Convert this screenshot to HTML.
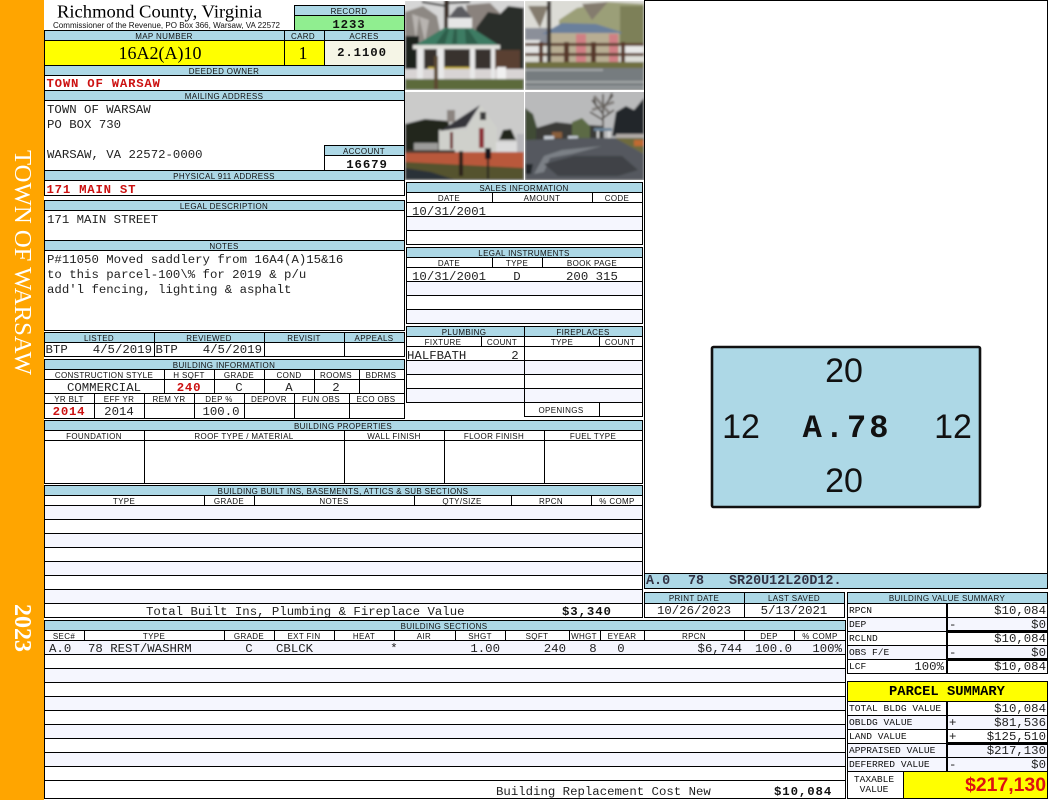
<!DOCTYPE html>
<html><head><meta charset="utf-8"><title>Richmond County, Virginia</title>
<style>
html,body{margin:0;padding:0;background:#fff;width:1050px;height:800px;overflow:hidden}
svg{display:block}
.l{font:8px "Liberation Sans",sans-serif;text-anchor:middle;letter-spacing:.35px;fill:#111}
.m{font:12.35px "Liberation Mono",monospace;fill:#222}
.b{font:bold 12.35px "Liberation Mono",monospace;fill:#111;letter-spacing:.9px}
.r{font:bold 12.35px "Liberation Mono",monospace;fill:#cc1111;letter-spacing:.75px}
.c{text-anchor:middle}.e{text-anchor:end}
.s{font:9.6px "Liberation Mono",monospace;fill:#111}
.a{font:34px "Liberation Sans",sans-serif;text-anchor:middle;fill:#111}
</style></head><body>
<svg width="1050" height="800" viewBox="0 0 1050 800" xmlns="http://www.w3.org/2000/svg">
<defs>
<filter id="f" x="0" y="0" width="100%" height="100%"><feGaussianBlur stdDeviation="1"/></filter>
<clipPath id="c1"><rect x="1" y="1" width="119" height="89"/></clipPath>
<clipPath id="c3"><rect x="1" y="2" width="119" height="88"/></clipPath>
</defs>
<rect width="1050" height="800" fill="#fff"/>
<rect width="44" height="800" fill="#FFA500"/>
<text transform="translate(15,150) rotate(90)" font-family="Liberation Serif" font-size="24" fill="#fff" textLength="225" lengthAdjust="spacingAndGlyphs">TOWN OF WARSAW</text>
<text transform="translate(15,604) rotate(90)" font-family="Liberation Serif" font-weight="bold" font-size="24" fill="#fff">2023</text>

<path fill="#ADD8E6" d="M294 5h110v11h-110zM44 30h360v10h-360zM44 65h360v10h-360zM44 90h360v10h-360zM324 145h80v10h-80zM44 170h360v10h-360zM44 200h360v10h-360zM44 240h360v10h-360zM44 332h360v10h-360zM44 359h360v10h-360zM44 420h598v10h-598zM44 485h598v10h-598zM44 620h801v10h-801zM644 592h200v11h-200zM847 592h200v11h-200zM406 182h236v10h-236zM406 247h236v10h-236zM406 326h236v10h-236zM644 573h404v15h-404z"/>
<rect x="294" y="16" width="110" height="14" fill="#90EE90"/>
<path fill="#FFFF00" d="M44 40h280v25h-280zM847 681h200v20h-200zM903 771h144v27h-144z"/>
<rect x="324" y="40" width="80" height="25" fill="#F5F5E6"/>
<path fill="#F5F6FE" d="M44 505h598v14h-598zM44 533h598v14h-598zM44 561h598v14h-598zM44 589h598v14h-598zM44 640h801v14h-801zM44 668h801v14h-801zM44 696h801v14h-801zM44 724h801v14h-801zM44 752h801v14h-801zM406 216h236v14h-236zM406 281h236v14h-236zM406 309h236v14h-236zM406 360h236v14h-236zM406 388h236v14h-236zM847 617h200v14h-200zM847 645h200v14h-200zM847 715h200v14h-200zM847 743h200v14h-200zM847 757h200v14h-200z"/>

<path stroke="#000" stroke-width="1" fill="none" shape-rendering="crispEdges" d="
M44 30.5H405M44 40.5H405M44 65.5H405M44 75.5H405M44 90.5H405M44 100.5H405M44 170.5H405M44 180.5H405M44 195.5H405
M44 200.5H405M44 210.5H405M44 240.5H405M44 250.5H405M44 330.5H405M44 332.5H405M44 342.5H405M44 356.5H405M44 359.5H405M44 369.5H405M44 379.5H405M44 393.5H405M44 403.5H405M44 418.5H405
M44.5 30V196M44.5 200V331M44.5 332V357M44.5 359V419M404.5 5V196M404.5 200V331M404.5 332V357M404.5 359V419
M284.5 30V65M324.5 30V65M324.5 145V170M324 145.5H405M324 155.5H405M294 5.5H405M294 15.5H405M294.5 5V30
M154.5 332V356M264.5 332V356M344.5 332V356
M164.5 369V393M214.5 369V393M264.5 369V393M314.5 369V393M359.5 369V393M94.5 393V418M144.5 393V418M194.5 393V418M244.5 393V418M294.5 393V418M349.5 393V418
M44 420.5H643M44 430.5H643M44 440.5H643M44 483.5H643M44.5 420V484M642.5 420V484M144.5 430V483M344.5 430V483M444.5 430V483M544.5 430V483
M44 485.5H643M44 495.5H643M44 505.5H643M44 519.5H643M44 533.5H643M44 547.5H643M44 561.5H643M44 575.5H643M44 589.5H643M44 603.5H643M44 617.5H643M44.5 485V618M642.5 485V618M204.5 495V505M254.5 495V505M414.5 495V505M511.5 495V505M591.5 495V505
M44 620.5H846M44 630.5H846M44 640.5H846M44 654.5H846M44 668.5H846M44 682.5H846M44 696.5H846M44 710.5H846M44 724.5H846M44 738.5H846M44 752.5H846M44 766.5H846M44 780.5H846M44 798.5H846M44.5 620V799M845.5 620V799
M84.5 630V640M224.5 630V640M274.5 630V640M334.5 630V640M394.5 630V640M455.5 630V640M505.5 630V640M569.5 630V640M600.5 630V640M644.5 630V640M744.5 630V640M794.5 630V640
M644 592.5H845M644 603.5H845M644 617.5H845M644.5 592V618M744.5 592V617M844.5 592V618
M644.5 0V589M644 0.5H1048M1047.5 0V589M644 573.5H1048M644 588.5H1048
M847 592.5H1048M847 603.5H1048M847 617.5H1048M847 631.5H1048M847 645.5H1048M847 659.5H1048M847 673.5H1048M847.5 592V674M1047.5 592V674M946.5 603V673
M847 681.5H1048M847 701.5H1048M847 715.5H1048M847 729.5H1048M847 743.5H1048M847 757.5H1048M847 771.5H1048M847 798.5H1048M847.5 681V799M1047.5 681V799M946.5 701V771M903.5 771V798
M406 182.5H643M406 192.5H643M406 202.5H643M406 216.5H643M406 230.5H643M406 244.5H643M406.5 182V245M642.5 182V245M492.5 192V202M592.5 192V202
M406 247.5H643M406 257.5H643M406 267.5H643M406 281.5H643M406 295.5H643M406 309.5H643M406 323.5H643M406.5 247V324M642.5 247V324M492.5 257V267M542.5 257V267
M406 326.5H643M406 336.5H643M406 346.5H643M406 360.5H643M406 374.5H643M406 388.5H643M406 402.5H643M524 416.5H643M406.5 326V403M642.5 326V417M524.5 326V417M481.5 336V346M599.5 336V346M599.5 402V416"/>
<path fill="#000" d="M947 630h100v3h-100zM947 658h100v3h-100zM947 742h100v3h-100zM947 603h1v70h-1zM947 701h1v70h-1z"/>

<!-- Header -->
<text x="57" y="17.5" font-family="Liberation Serif" font-size="18" fill="#000" textLength="205" lengthAdjust="spacingAndGlyphs">Richmond County, Virginia</text>
<text x="53" y="28" font-family="Liberation Sans" font-size="8" fill="#111" textLength="227" lengthAdjust="spacingAndGlyphs">Commissioner of the Revenue, PO Box 366, Warsaw, VA 22572</text>
<text x="160" y="59" font-family="Liberation Serif" font-size="18" fill="#000" text-anchor="middle">16A2(A)10</text>
<text x="303" y="59" font-family="Liberation Serif" font-size="18" fill="#000" text-anchor="middle">1</text>

<g class="l">
<text class="l" x="349" y="14">RECORD</text>
<text class="l" x="164" y="39">MAP NUMBER</text><text class="l" x="303" y="39">CARD</text><text class="l" x="364" y="39">ACRES</text>
<text class="l" x="224" y="74">DEEDED OWNER</text><text class="l" x="224" y="99">MAILING ADDRESS</text>
<text class="l" x="364" y="154">ACCOUNT</text><text class="l" x="224" y="179">PHYSICAL 911 ADDRESS</text>
<text class="l" x="224" y="209">LEGAL DESCRIPTION</text><text class="l" x="224" y="249">NOTES</text>
<text class="l" x="99" y="341">LISTED</text><text class="l" x="209" y="341">REVIEWED</text><text class="l" x="304" y="341">REVISIT</text><text class="l" x="374" y="341">APPEALS</text>
<text class="l" x="224" y="368">BUILDING INFORMATION</text>
<text class="l" x="104" y="378">CONSTRUCTION STYLE</text><text class="l" x="189" y="378">H SQFT</text><text class="l" x="239" y="378">GRADE</text><text class="l" x="289" y="378">COND</text><text class="l" x="336" y="378">ROOMS</text><text class="l" x="381" y="378">BDRMS</text>
<text class="l" x="69" y="402">YR BLT</text><text class="l" x="119" y="402">EFF YR</text><text class="l" x="169" y="402">REM YR</text><text class="l" x="219" y="402">DEP %</text><text class="l" x="269" y="402">DEPOVR</text><text class="l" x="321" y="402">FUN OBS</text><text class="l" x="376" y="402">ECO OBS</text>
<text class="l" x="343" y="429">BUILDING PROPERTIES</text>
<text class="l" x="94" y="439">FOUNDATION</text><text class="l" x="244" y="439">ROOF TYPE / MATERIAL</text><text class="l" x="394" y="439">WALL FINISH</text><text class="l" x="494" y="439">FLOOR FINISH</text><text class="l" x="593" y="439">FUEL TYPE</text>
<text class="l" x="343" y="494">BUILDING BUILT INS, BASEMENTS, ATTICS &amp; SUB SECTIONS</text>
<text class="l" x="124" y="504">TYPE</text><text class="l" x="229" y="504">GRADE</text><text class="l" x="334" y="504">NOTES</text><text class="l" x="462" y="504">QTY/SIZE</text><text class="l" x="551" y="504">RPCN</text><text class="l" x="617" y="504">% COMP</text>
<text class="l" x="444" y="629">BUILDING SECTIONS</text>
<text class="l" x="64" y="639">SEC#</text><text class="l" x="154" y="639">TYPE</text><text class="l" x="249" y="639">GRADE</text><text class="l" x="304" y="639">EXT FIN</text><text class="l" x="364" y="639">HEAT</text><text class="l" x="424" y="639">AIR</text><text class="l" x="480" y="639">SHGT</text><text class="l" x="537" y="639">SQFT</text><text class="l" x="584" y="639">WHGT</text><text class="l" x="622" y="639">EYEAR</text><text class="l" x="694" y="639">RPCN</text><text class="l" x="769" y="639">DEP</text><text class="l" x="820" y="639">% COMP</text>
<text class="l" x="694" y="601">PRINT DATE</text><text class="l" x="794" y="601">LAST SAVED</text>
<text class="l" x="947" y="601">BUILDING VALUE SUMMARY</text>
<text class="l" x="524" y="191">SALES INFORMATION</text>
<text class="l" x="449" y="201">DATE</text><text class="l" x="542" y="201">AMOUNT</text><text class="l" x="617" y="201">CODE</text>
<text class="l" x="524" y="256">LEGAL INSTRUMENTS</text>
<text class="l" x="449" y="266">DATE</text><text class="l" x="517" y="266">TYPE</text><text class="l" x="592" y="266">BOOK PAGE</text>
<text class="l" x="464" y="335">PLUMBING</text><text class="l" x="583" y="335">FIREPLACES</text>
<text class="l" x="443" y="345">FIXTURE</text><text class="l" x="502" y="345">COUNT</text><text class="l" x="562" y="345">TYPE</text><text class="l" x="620" y="345">COUNT</text>
<text class="l" x="561" y="413">OPENINGS</text>
</g>

<!-- Values -->
<text class="b c" x="349" y="28">1233</text>
<text class="b c" x="362" y="56" letter-spacing="1">2.1100</text>
<text class="r" x="46.5" y="87">TOWN OF WARSAW</text>
<text class="m" x="47" y="113">TOWN OF WARSAW</text>
<text class="m" x="47" y="128">PO BOX 730</text>
<text class="m" x="47" y="158">WARSAW, VA 22572-0000</text>
<text class="b c" x="367" y="168">16679</text>
<text class="r" x="46.5" y="193">171 MAIN ST</text>
<text class="m" x="47" y="223">171 MAIN STREET</text>
<text class="m" x="47" y="263">P#11050 Moved saddlery from 16A4(A)15&amp;16</text>
<text class="m" x="47" y="278">to this parcel-100\% for 2019 &amp; p/u</text>
<text class="m" x="47" y="293">add'l fencing, lighting &amp; asphalt</text>
<text class="m" x="45.5" y="353">BTP</text><text class="m e" x="152" y="353">4/5/2019</text>
<text class="m" x="155.5" y="353">BTP</text><text class="m e" x="262" y="353">4/5/2019</text>
<text class="m c" x="104" y="391">COMMERCIAL</text><text class="r c" x="189" y="391">240</text><text class="m c" x="239" y="391">C</text><text class="m c" x="289" y="391">A</text><text class="m c" x="336" y="391">2</text>
<text class="r c" x="69" y="415">2014</text><text class="m c" x="119" y="415">2014</text><text class="m c" x="221" y="415">100.0</text>
<text class="m" x="412" y="215">10/31/2001</text>
<text class="m" x="412" y="280">10/31/2001</text><text class="m c" x="517" y="280">D</text><text class="m" x="566" y="280">200 315</text>
<text class="m" x="407" y="359">HALFBATH</text><text class="m c" x="515" y="359">2</text>
<text class="m" x="146" y="615">Total Built Ins, Plumbing &amp; Fireplace Value</text><text class="b" x="562" y="615">$3,340</text>
<text class="m" x="49" y="652">A.0</text><text class="m" x="88" y="652">78 REST/WASHRM</text><text class="m c" x="249" y="652">C</text><text class="m" x="276" y="652">CBLCK</text><text class="m c" x="394" y="652">*</text><text class="m e" x="500" y="652">1.00</text><text class="m e" x="566" y="652">240</text><text class="m c" x="593" y="652">8</text><text class="m c" x="621" y="652">0</text><text class="m e" x="742" y="652">$6,744</text><text class="m e" x="792" y="652">100.0</text><text class="m e" x="842" y="652">100%</text>
<text class="m" x="496" y="795">Building Replacement Cost New</text><text class="b" x="774" y="795">$10,084</text>
<text class="m c" x="694" y="614">10/26/2023</text><text class="m c" x="794" y="614">5/13/2021</text>
<g font-family="Liberation Mono" font-size="13.4" fill="#334" font-weight="bold"><text x="646" y="584">A.0</text><text x="688" y="584">78</text><text x="729" y="584">SR20U12L20D12.</text></g>

<!-- Summary -->
<text class="s" x="849" y="613">RPCN</text><text class="m e" x="1046" y="614">$10,084</text>
<text class="s" x="849" y="627">DEP</text><text class="m" x="949" y="628">-</text><text class="m e" x="1046" y="628">$0</text>
<text class="s" x="849" y="641">RCLND</text><text class="m e" x="1046" y="642">$10,084</text>
<text class="s" x="849" y="655">OBS F/E</text><text class="m" x="949" y="656">-</text><text class="m e" x="1046" y="656">$0</text>
<text class="s" x="849" y="669">LCF</text><text class="m e" x="944" y="670">100%</text><text class="m e" x="1046" y="670">$10,084</text>
<text font-family="Liberation Mono" font-weight="bold" font-size="13.8" text-anchor="middle" x="947" y="695" fill="#000">PARCEL SUMMARY</text>
<text class="s" x="849" y="711">TOTAL BLDG VALUE</text><text class="m e" x="1046" y="712">$10,084</text>
<text class="s" x="849" y="725">OBLDG VALUE</text><text class="m" x="949" y="726">+</text><text class="m e" x="1046" y="726">$81,536</text>
<text class="s" x="849" y="739">LAND VALUE</text><text class="m" x="949" y="740">+</text><text class="m e" x="1046" y="740">$125,510</text>
<text class="s" x="849" y="753">APPRAISED VALUE</text><text class="m e" x="1046" y="754">$217,130</text>
<text class="s" x="849" y="767">DEFERRED VALUE</text><text class="m" x="949" y="768">-</text><text class="m e" x="1046" y="768">$0</text>
<text class="s c" x="874" y="782">TAXABLE</text><text class="s c" x="874" y="792">VALUE</text>
<text font-family="Liberation Sans" font-weight="bold" font-size="19.4" text-anchor="end" x="1046" y="791" fill="#dd1111">$217,130</text>

<!-- Sketch -->
<rect x="712" y="347" width="268" height="160" rx="1.5" fill="#ADD8E6" stroke="#111" stroke-width="2.6"/>
<text class="a" x="844" y="382">20</text><text class="a" x="844" y="492">20</text>
<text class="a" x="741" y="438">12</text><text class="a" x="953" y="438">12</text>
<text font-family="Liberation Mono" font-weight="bold" font-size="32" x="847" y="437" text-anchor="middle" letter-spacing="3" fill="#111">A.78</text>

<!-- Photos -->
<g transform="translate(404,0)" clip-path="url(#c1)"><g filter="url(#f)">
<rect width="122" height="92" fill="#d6d6d6"/>
<path fill="#8d8883" d="M1 12l18-6 14 10 4 20-6 12H1z"/><path fill="#b8b4b0" d="M8 14l4 26 3-24 6 26 4-22z"/>
<path fill="#8a827d" d="M62 5l24-2 10 10-10 18H66z"/>
<path fill="#2c2f29" d="M72 28l12-16 12 2 8-8 16 2v76H72z"/><path fill="#5a4133" d="M80 50h36v22H80z"/>
<rect x="1" y="36" width="14" height="36" fill="#1e201e"/>
<rect x="40" y="0" width="5" height="30" fill="#3a2e28"/><path stroke="#333" stroke-width="2" fill="none" d="M18 2l24 4M44 3l22-1"/>
<rect x="20" y="49" width="70" height="24" fill="#37302e"/>
<rect x="1" y="69" width="119" height="10" fill="#d8d4d4"/><rect x="24" y="67" width="44" height="2" fill="#c8b13c"/>
<rect x="44" y="17" width="24" height="12" fill="#e6e6e6"/><path fill="#5c5c60" d="M44 18l9-11 5-1 10 12z"/>
<path fill="#3e7b63" d="M10 46l30-18h28l28 18z"/><path fill="#2d5e4c" d="M32 44l10-15h3l-4 15zM62 44l-1-15h3l10 15zM48 44l2-15h3v15z"/>
<rect x="9" y="45" width="87" height="4" fill="#e2e2dd"/>
<g fill="#e8e8e8"><rect x="13" y="49" width="6" height="30"/><rect x="33" y="49" width="7" height="30"/><rect x="66" y="49" width="5" height="30"/><rect x="87" y="49" width="4" height="30"/></g>
<rect x="93" y="67" width="9" height="13" fill="#f0f0f0"/>
<rect x="1" y="79" width="119" height="11" fill="#5c6a3b"/><rect x="30" y="56" width="4" height="34" fill="#5b4a33"/>
</g></g>
<g transform="translate(524,0)" clip-path="url(#c1)"><g filter="url(#f)">
<rect width="122" height="92" fill="#dcdcd6"/>
<path fill="#9b9f78" d="M35 20l18-12 30-6 37 2v42H35z"/><path fill="#7d8059" d="M96 6h24v40H96z"/><path fill="#847c6e" d="M58 4l10 16 16-18zM4 6l12 22 8-22z"/>
<rect x="1" y="28" width="22" height="16" fill="#8b8f99"/>
<path fill="#6b809c" d="M18 34l20-11 34 1 25 8v2H18z"/>
<rect x="27" y="33" width="68" height="30" fill="#b8ad93"/>
<rect x="52" y="34" width="10" height="28" fill="#d07f84"/><rect x="85" y="34" width="9" height="28" fill="#d07f84"/>
<rect x="1" y="40" width="15" height="14" fill="#e4e4e4"/><rect x="100" y="44" width="19" height="11" fill="#e8e8e8"/>
<rect x="1" y="43" width="119" height="3" fill="#5e4332"/><rect x="1" y="53" width="119" height="3" fill="#5e4332"/>
<g fill="#57392b"><rect x="15" y="42" width="4" height="23"/><rect x="40" y="42" width="5" height="23"/><rect x="67" y="42" width="5" height="23"/><rect x="97" y="42" width="4" height="23"/></g>
<rect x="23" y="1" width="4" height="64" fill="#3a3633"/>
<rect x="1" y="62" width="119" height="6" fill="#70703f"/>
<rect x="1" y="68" width="119" height="22" fill="#767c7f"/><path fill="#a4a8a9" d="M1 69h78v2H1zM1 81h119v2H1z"/><rect x="1" y="86" width="119" height="2" fill="#9a9ea0"/>
</g></g>
<g transform="translate(404,90)" clip-path="url(#c3)"><g filter="url(#f)">
<rect width="122" height="92" fill="#cbcbca"/>
<path fill="#23261f" d="M1 34l20-5 24 2v32H1z"/>
<rect x="43" y="20" width="8" height="12" fill="#8b8480"/>
<path fill="#cfd0cb" d="M35 40h28l14-25 16 23v24H35z"/>
<path fill="#34343a" d="M36 41l40-26-14 22z"/>
<rect x="75" y="38" width="5" height="20" fill="#8d2f36"/><rect x="46" y="42" width="3" height="17" fill="#6f2a2e"/><rect x="76" y="22" width="6" height="8" fill="#3a3a3a"/>
<rect x="10" y="53" width="24" height="10" fill="#9c9c9a"/>
<path fill="#22261f" d="M95 50l4-10 8-1 5 11z"/>
<rect x="92" y="52" width="22" height="11" fill="#dcdcdc"/><rect x="113" y="44" width="7" height="20" fill="#b6b6ba"/>
<rect x="1" y="62" width="119" height="16" fill="#b9593a"/><rect x="1" y="60" width="50" height="3" fill="#4a3a30"/>
<path fill="#55522e" d="M1 72l119 6v12H1z"/>
<path fill="#2c3038" d="M1 78l26 4 24 8H1z"/>
<rect x="55" y="61" width="4" height="25" fill="#2b211c"/>
<rect x="81" y="58" width="6" height="11" fill="#16181a"/><rect x="83" y="69" width="2" height="20" fill="#222"/>
</g></g>
<g transform="translate(524,90)" clip-path="url(#c3)"><g filter="url(#f)">
<rect width="122" height="92" fill="#b9babb"/>
<path fill="#3f4c36" d="M1 18l8 6 6 20v8H1z"/>
<path fill="#3a3b38" d="M12 38l20-6 18 2 30 2v14H12z"/><path fill="#5b6a44" d="M48 32l10-4 8 8v12H48z"/>
<path fill="#8a5e3a" d="M28 42h10v6H28z"/><path fill="#c6ccd4" d="M20 46h10v4H20zM44 46h10v3H44z"/>
<path stroke="#4e4843" stroke-width="1.6" fill="none" d="M79 38V4M79 24L68 10M79 18l10-13M79 28l11-8M79 30L66 22M72 16l-2-8M85 10l3-7"/>
<path stroke="#6a6560" stroke-width="3" fill="none" opacity=".7" d="M68 20l22-8M70 6l16 18"/>
<path fill="#22282a" d="M88 46l4-24 10-6 8 4 10-12v40z"/>
<rect x="70" y="38" width="18" height="3" fill="#6b8296"/><rect x="73" y="41" width="2" height="8" fill="#ddd"/><rect x="84" y="41" width="2" height="8" fill="#ddd"/>
<rect x="92" y="44" width="28" height="5" fill="#b0aca8"/>
<path fill="#6e6a3c" d="M90 48h30v16z"/><path fill="#c06a30" d="M110 50h10v6h-10z"/>
<path fill="#55595e" d="M1 50l60-2 30 0 29 16v26H1z"/>
<path fill="#7c8086" d="M10 84l10-18 18-6 40-4-30 8-22 4-6 14z"/>
<path fill="#3f4247" d="M20 74l30-8h48l16 14-20 6H34z"/>
<path fill="#23262a" d="M1 74h8l-2 10H1z"/>
</g></g>
</svg>
</body></html>
